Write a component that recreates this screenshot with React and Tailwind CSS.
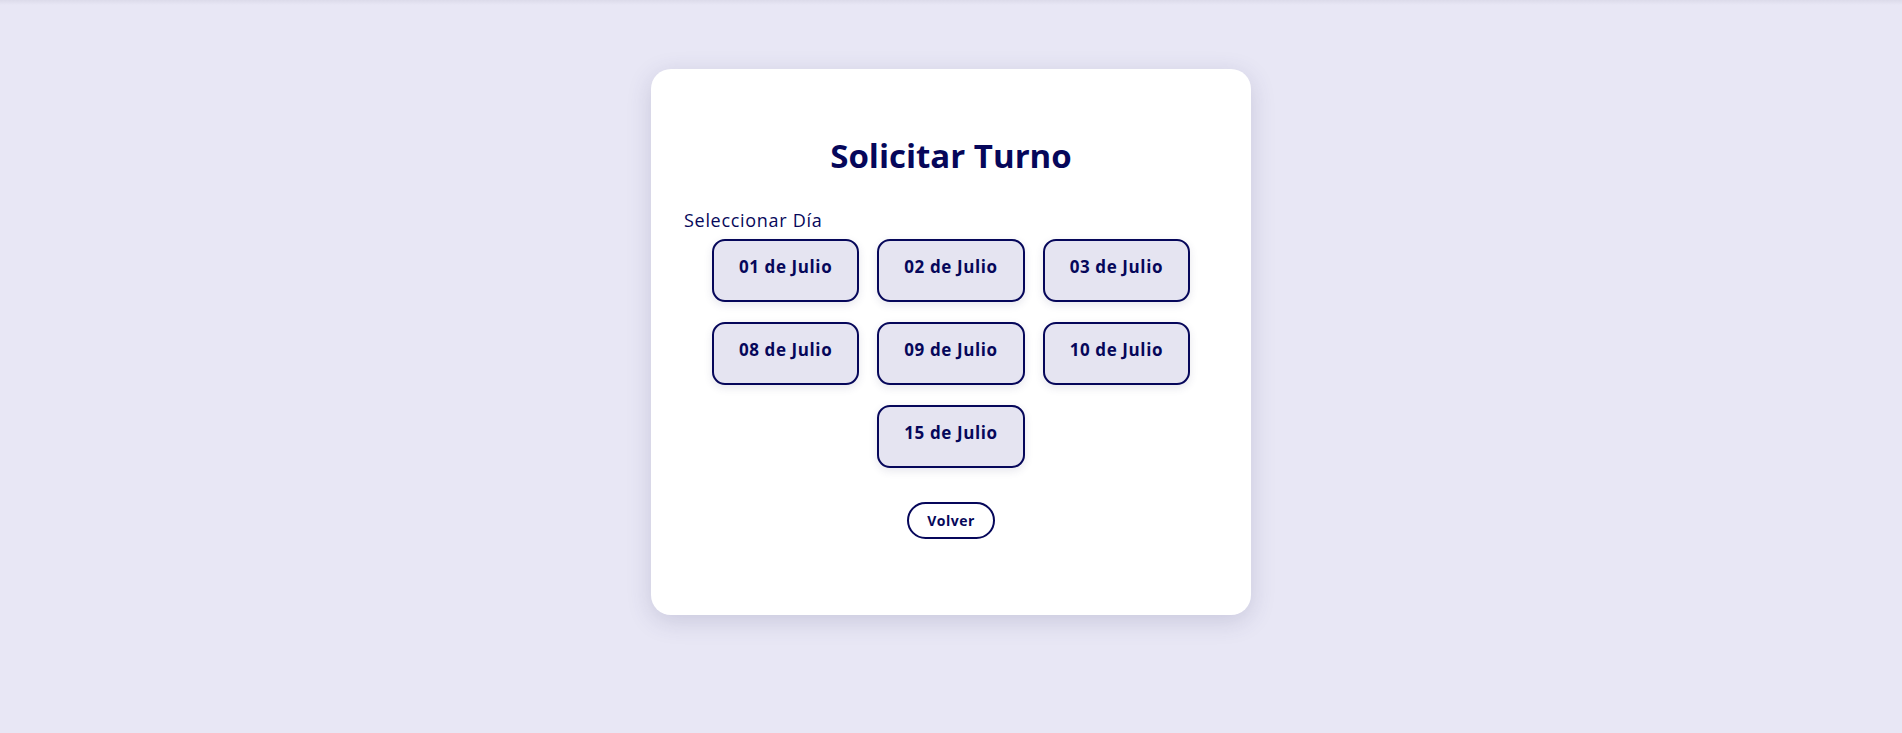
import React from 'react';

const dias = ['01 de Julio', '02 de Julio', '03 de Julio', '08 de Julio', '09 de Julio', '10 de Julio', '15 de Julio'];

function App() {
    return (
        <div
            className="min-h-screen w-full bg-[#e8e7f5] relative"
            style={{ fontFamily: '"Open Sans", "Noto Sans", sans-serif' }}
        >
            <div className="absolute top-0 left-0 right-0 h-[5px] bg-gradient-to-b from-[#dcdbea] to-transparent" />
            <div className="flex justify-center pt-[69px]">
                <div className="w-[600px] h-[546px] bg-white rounded-[20px] shadow-[0_6px_24px_rgba(60,60,110,0.18)] px-[33px] pt-[66px] flex flex-col items-center">
                    <h1 className="text-[33px] leading-[42px] font-bold text-[#06075a] tracking-[0px]">
                        Solicitar Turno
                    </h1>
                    <p className="self-start mt-[32px] text-[18px] leading-[22px] font-medium text-[#06075a] tracking-[0.7px]">
                        Seleccionar Día
                    </p>
                    <div className="flex flex-wrap justify-center gap-x-[18px] gap-y-[20px] mt-[8px] w-[538px]">
                        {dias.map((d) => (
                            <button
                                key={d}
                                className="h-[63px] px-[25px] pb-[8px] bg-[#e5e4f1] border-2 border-[#06075a] rounded-[13px] text-[17px] tracking-[0.6px] font-bold text-[#06075a] shadow-[0_3px_8px_rgba(60,60,110,0.12)]"
                            >
                                {d}
                            </button>
                        ))}
                    </div>
                    <button className="mt-[34px] h-[37px] w-[88px] rounded-full border-2 border-[#06075a] bg-white text-[14px] tracking-[0.5px] font-bold text-[#06075a]">
                        Volver
                    </button>
                </div>
            </div>
        </div>
    );
}

export default App;
